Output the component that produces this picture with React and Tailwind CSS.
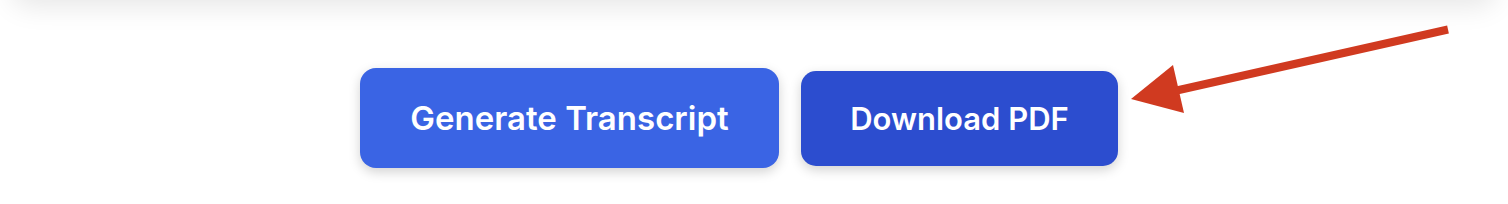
export default function App() {
  return (
    <div className="relative h-[204px] w-full overflow-hidden bg-white" style={{ fontFamily: "Inter, 'Noto Sans', sans-serif" }}>
      {/* card above, only its bottom shadow shows */}
      <div className="mx-[12px] -mt-[60px] h-[58px] rounded-b-2xl bg-white shadow-[0_8px_28px_rgba(0,0,0,0.10)]" />

      <div className="mt-[70px] flex items-center gap-[22px] pl-[360px]">
        <button className="h-[100px] w-[419px] rounded-[16px] bg-[#3a64e4] pt-[2px] text-[33px] font-semibold text-white shadow-[0_4px_12px_rgba(0,0,0,0.18)]">
          Generate Transcript
        </button>
        <button className="h-[95px] w-[317px] rounded-[15px] bg-[#2c4dcf] pt-[2px] text-[31px] font-semibold text-white shadow-[0_4px_12px_rgba(0,0,0,0.18)]">
          Download PDF
        </button>
      </div>

      {/* annotation arrow */}
      <svg className="pointer-events-none absolute left-0 top-0" width="1508" height="204" viewBox="0 0 1508 204">
        <line x1="1448" y1="29.5" x2="1170" y2="92" stroke="#d03a20" strokeWidth="8" />
        <polygon points="1131,99 1173,65 1184,113" fill="#d03a20" />
      </svg>
    </div>
  );
}
